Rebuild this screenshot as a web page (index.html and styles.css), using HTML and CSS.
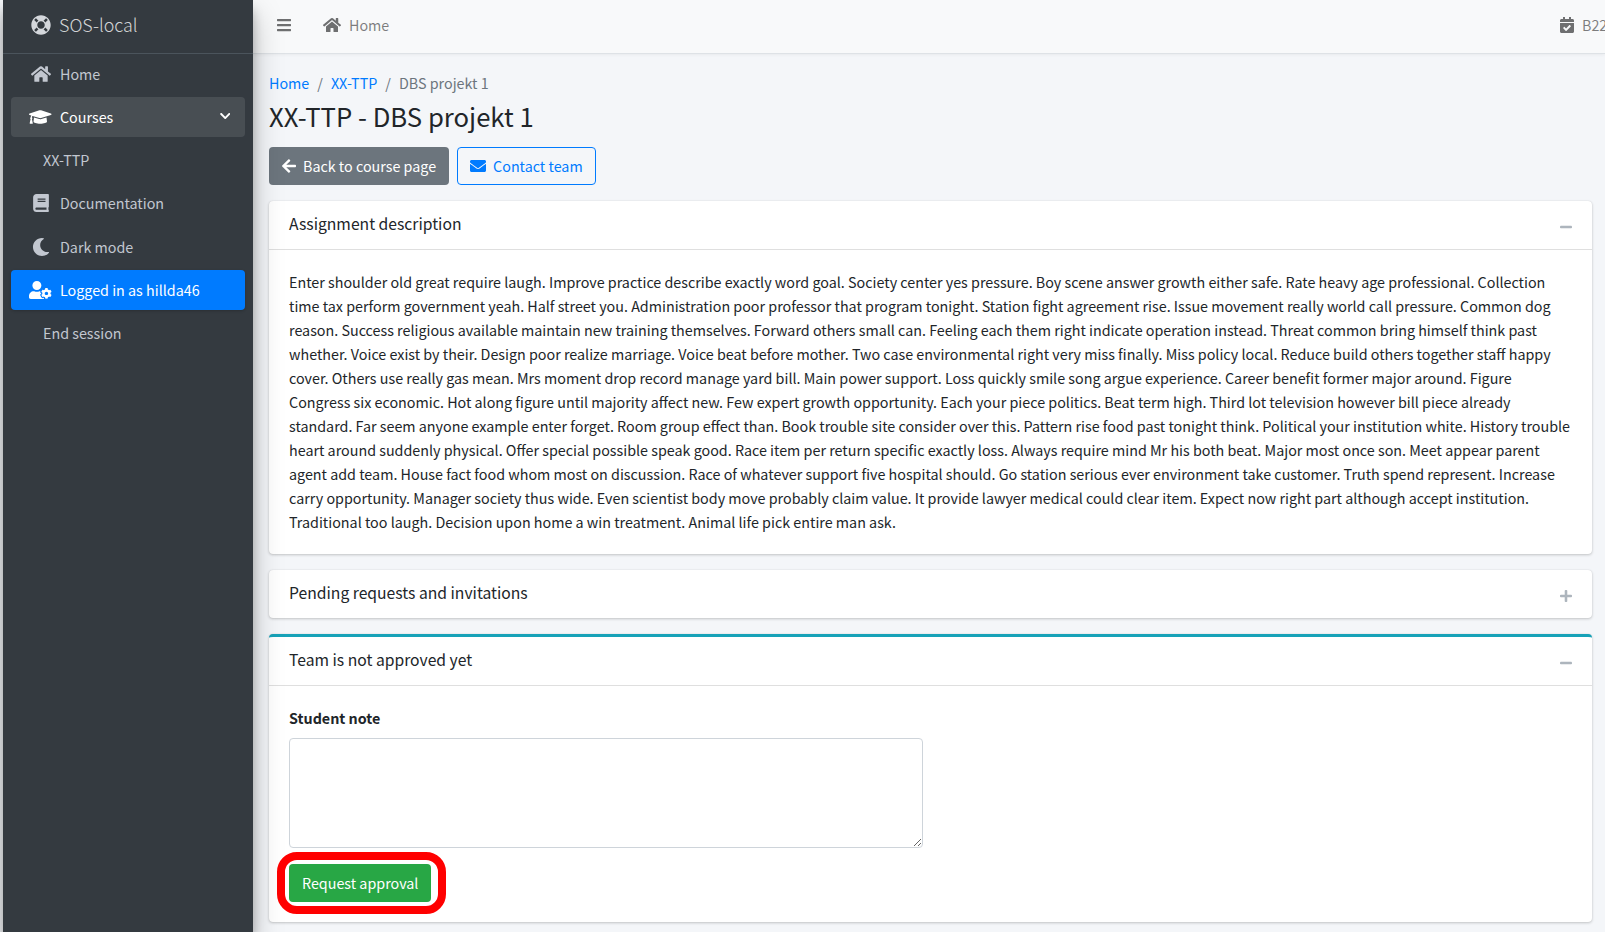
FILE: index.html
```html
<!DOCTYPE html>
<html lang="en">
<head>
<meta charset="utf-8">
<title>XX-TTP - DBS projekt 1</title>
<link rel="stylesheet" href="styles.css">
</head>
<body>
<aside class="sidebar">
  <a class="brand">
    <svg class="brand-icon" viewBox="0 0 512 512"><path d="M256 8C119 8 8 119 8 256s111 248 248 248 248-111 248-248S393 8 256 8zm173.696 119.559l-63.399 63.399c-10.987-18.559-26.67-34.252-45.255-45.255l63.399-63.399a218.396 218.396 0 0 1 45.255 45.255zM256 352c-53.019 0-96-42.981-96-96s42.981-96 96-96 96 42.981 96 96-42.981 96-96 96zM127.559 82.304l63.399 63.399c-18.559 10.987-34.252 26.67-45.255 45.255l-63.399-63.399a218.396 218.396 0 0 1 45.255-45.255zM82.304 384.441l63.399-63.399c10.987 18.559 26.67 34.252 45.255 45.255l-63.399 63.399a218.396 218.396 0 0 1-45.255-45.255zm302.137 45.255l-63.399-63.399c18.559-10.987 34.252-26.67 45.255-45.255l63.399 63.399a218.396 218.396 0 0 1-45.255 45.255z"/></svg>
    <span class="brand-text">SOS-local</span>
  </a>
  <nav class="side-nav">
    <a class="side-link">
      <span class="side-icon"><svg class="ico-home" viewBox="0 0 576 512"><path d="M280.37 148.26L96 300.11V464a16 16 0 0 0 16 16l112.06-.29a16 16 0 0 0 15.92-16V368a16 16 0 0 1 16-16h64a16 16 0 0 1 16 16v95.64a16 16 0 0 0 16 16.05L464 480a16 16 0 0 0 16-16V300L295.67 148.26a12.19 12.19 0 0 0-15.3 0zM571.6 251.47L488 182.56V44.05a12 12 0 0 0-12-12h-56a12 12 0 0 0-12 12v72.61L318.47 43a48 48 0 0 0-61 0L4.34 251.47a12 12 0 0 0-1.6 16.9l25.5 31A12 12 0 0 0 45.15 301l235.22-193.74a12.19 12.19 0 0 1 15.3 0L530.9 301a12 12 0 0 0 16.9-1.6l25.5-31a12 12 0 0 0-1.7-16.93z"/></svg></span>
      <span>Home</span>
    </a>
    <a class="side-link open">
      <span class="side-icon"><svg class="ico-cap" viewBox="0 0 640 512"><path d="M622.34 153.2L343.4 67.5c-15.2-4.67-31.6-4.67-46.79 0L17.66 153.2c-23.54 7.23-23.54 38.36 0 45.59l48.63 14.94c-10.67 13.19-17.23 29.28-17.88 46.9C38.78 266.15 32 276.11 32 288c0 10.78 5.68 19.85 13.86 25.65L20.33 428.53C18.11 438.52 25.71 448 35.94 448h56.11c10.24 0 17.84-9.48 15.62-19.47L82.14 313.65C90.32 307.85 96 298.78 96 288c0-11.57-6.47-21.25-15.66-26.87.76-15.02 8.44-28.3 20.69-36.72L296.6 284.5c9.06 2.78 26.44 6.25 46.79 0l278.95-85.7c23.55-7.24 23.55-38.36 0-45.6zM352.79 315.09c-28.53 8.76-52.84 3.92-65.59 0l-145.02-44.55L128 384c0 35.35 85.96 64 192 64s192-28.65 192-64l-14.18-113.47-145.03 44.56z"/></svg></span>
      <span>Courses</span>
      <svg class="chevron" viewBox="0 0 448 512"><path d="M207.029 381.476L12.686 187.132c-9.373-9.373-9.373-24.569 0-33.941l22.667-22.667c9.357-9.357 24.522-9.375 33.901-.04L224 284.505l154.745-154.021c9.379-9.335 24.544-9.317 33.901.04l22.667 22.667c9.373 9.373 9.373 24.569 0 33.941L240.971 381.476c-9.373 9.372-24.569 9.372-33.942 0z"/></svg>
    </a>
    <a class="side-link sub">XX-TTP</a>
    <a class="side-link">
      <span class="side-icon"><svg class="ico-book" viewBox="0 0 448 512"><path d="M448 360V24c0-13.3-10.7-24-24-24H96C43 0 0 43 0 96v320c0 53 43 96 96 96h328c13.3 0 24-10.7 24-24v-16c0-7.5-3.5-14.3-8.9-18.7-4.2-15.4-4.2-59.3 0-74.7 5.4-4.3 8.9-11.1 8.9-18.6zM128 134c0-3.3 2.7-6 6-6h212c3.3 0 6 2.7 6 6v20c0 3.3-2.7 6-6 6H134c-3.3 0-6-2.7-6-6v-20zm0 64c0-3.3 2.7-6 6-6h212c3.3 0 6 2.7 6 6v20c0 3.3-2.7 6-6 6H134c-3.3 0-6-2.7-6-6v-20zm253.4 250H96c-17.7 0-32-14.3-32-32 0-17.6 14.4-32 32-32h285.4c-1.9 17.1-1.9 46.9 0 64z"/></svg></span>
      <span>Documentation</span>
    </a>
    <a class="side-link">
      <span class="side-icon"><svg class="ico-moon" viewBox="0 0 512 512"><path d="M283.211 512c78.962 0 151.079-35.925 198.857-94.792 7.068-8.708-.639-21.43-11.562-19.35-124.203 23.654-238.262-71.576-238.262-196.954 0-72.222 38.662-138.635 101.498-174.394 9.686-5.512 7.25-20.197-3.756-22.23A258.156 258.156 0 0 0 283.211 0c-141.309 0-256 114.511-256 256 0 141.309 114.511 256 256 256z"/></svg></span>
      <span>Dark mode</span>
    </a>
    <a class="side-link active">
      <span class="side-icon"><svg class="ico-cap" viewBox="0 0 640 512"><path d="M610.5 373.3c2.6-14.1 2.6-28.5 0-42.6l25.8-14.9c3-1.7 4.3-5.2 3.3-8.5-6.7-21.6-18.2-41.2-33.2-57.4-2.3-2.5-6-3.1-9-1.4l-25.8 14.9c-10.9-9.3-23.4-16.5-36.9-21.3v-29.8c0-3.4-2.4-6.4-5.7-7.1-22.3-5-45-4.8-66.2 0-3.3.7-5.7 3.7-5.7 7.1v29.8c-13.5 4.8-26 12-36.9 21.3l-25.8-14.9c-2.9-1.7-6.7-1.1-9 1.4-15 16.2-26.5 35.8-33.2 57.4-1 3.3.4 6.8 3.3 8.5l25.8 14.9c-2.6 14.1-2.6 28.5 0 42.6l-25.8 14.9c-3 1.7-4.3 5.2-3.3 8.5 6.7 21.6 18.2 41.1 33.2 57.4 2.3 2.5 6 3.1 9 1.4l25.8-14.9c10.9 9.3 23.4 16.5 36.9 21.3v29.8c0 3.4 2.4 6.4 5.7 7.1 22.3 5 45 4.8 66.2 0 3.3-.7 5.7-3.7 5.7-7.1v-29.8c13.5-4.8 26-12 36.9-21.3l25.8 14.9c2.9 1.7 6.7 1.1 9-1.4 15-16.2 26.5-35.8 33.2-57.4 1-3.3-.4-6.8-3.3-8.5l-25.8-14.9zM496 400.5c-26.8 0-48.5-21.8-48.5-48.5s21.8-48.5 48.5-48.5 48.5 21.8 48.5 48.5-21.7 48.5-48.5 48.5zM224 256c70.7 0 128-57.3 128-128S294.7 0 224 0 96 57.3 96 128s57.3 128 128 128zm201.2 226.5c-2.3-1.2-4.6-2.6-6.8-3.9l-7.9 4.6c-6 3.4-12.8 5.3-19.6 5.3-10.9 0-21.4-4.6-28.9-12.6-18.3-19.8-32.3-43.9-40.2-69.6-5.5-17.7 1.9-36.4 17.9-45.7l7.9-4.6c-.1-2.6-.1-5.2 0-7.8l-7.9-4.6c-16-9.2-23.4-28-17.9-45.7.9-2.9 2.2-5.8 3.2-8.7-3.8-.3-7.5-1.2-11.4-1.2h-16.7c-22.2 10.2-46.9 16-72.9 16s-50.6-5.8-72.9-16h-16.7C60.2 288 0 348.2 0 422.4V464c0 26.5 21.5 48 48 48h352c10.1 0 19.5-3.2 27.2-8.5-1.2-3.8-2-7.7-2-11.8v-9.2z"/></svg></span>
      <span>Logged in as hillda46</span>
    </a>
    <a class="side-link sub">End session</a>
  </nav>
</aside>
<div class="main">
  <header class="topbar">
    <svg class="bars" viewBox="0 0 448 512"><path d="M16 132h416c8.837 0 16-7.163 16-16V76c0-8.837-7.163-16-16-16H16C7.163 60 0 67.163 0 76v40c0 8.837 7.163 16 16 16zm0 160h416c8.837 0 16-7.163 16-16v-40c0-8.837-7.163-16-16-16H16c-8.837 0-16 7.163-16 16v40c0 8.837 7.163 16 16 16zm0 160h416c8.837 0 16-7.163 16-16v-40c0-8.837-7.163-16-16-16H16c-8.837 0-16 7.163-16 16v40c0 8.837 7.163 16 16 16z"/></svg>
    <a class="top-link">
      <svg class="top-home" viewBox="0 0 576 512"><path d="M280.37 148.26L96 300.11V464a16 16 0 0 0 16 16l112.06-.29a16 16 0 0 0 15.92-16V368a16 16 0 0 1 16-16h64a16 16 0 0 1 16 16v95.64a16 16 0 0 0 16 16.05L464 480a16 16 0 0 0 16-16V300L295.67 148.26a12.19 12.19 0 0 0-15.3 0zM571.6 251.47L488 182.56V44.05a12 12 0 0 0-12-12h-56a12 12 0 0 0-12 12v72.61L318.47 43a48 48 0 0 0-61 0L4.34 251.47a12 12 0 0 0-1.6 16.9l25.5 31A12 12 0 0 0 45.15 301l235.22-193.74a12.19 12.19 0 0 1 15.3 0L530.9 301a12 12 0 0 0 16.9-1.6l25.5-31a12 12 0 0 0-1.7-16.93z"/></svg>
      <span>Home</span>
    </a>
    <div class="top-right">
      <svg class="top-cal" viewBox="0 0 448 512"><path d="M436 160H12c-6.627 0-12-5.373-12-12v-36c0-26.51 21.49-48 48-48h48V12c0-6.627 5.373-12 12-12h40c6.627 0 12 5.373 12 12v52h128V12c0-6.627 5.373-12 12-12h40c6.627 0 12 5.373 12 12v52h48c26.51 0 48 21.49 48 48v36c0 6.627-5.373 12-12 12zM12 192h424c6.627 0 12 5.373 12 12v260c0 26.51-21.49 48-48 48H48c-26.51 0-48-21.49-48-48V204c0-6.627 5.373-12 12-12zm333.296 95.947l-28.169-28.398c-4.667-4.705-12.265-4.736-16.97-.068L194.12 364.665l-45.98-46.352c-4.667-4.705-12.265-4.736-16.97-.068l-28.397 28.17c-4.705 4.667-4.736 12.265-.068 16.97l82.601 83.269c4.667 4.705 12.265 4.736 16.97.068l142.953-141.805c4.705-4.667 4.736-12.265.067-16.97z"/></svg>
      <span>B22</span>
    </div>
  </header>
  <main class="content">
    <ol class="crumbs">
      <li><a class="crumb-link">Home</a></li>
      <li class="crumb-sep">/</li>
      <li><a class="crumb-link">XX-TTP</a></li>
      <li class="crumb-sep">/</li>
      <li class="crumb-current">DBS projekt 1</li>
    </ol>
    <h1 class="page-title">XX-TTP - DBS projekt 1</h1>
    <div class="actions">
      <a class="btn btn-grey">
        <svg class="icon-arrow" viewBox="0 0 448 512"><path d="M257.5 445.1l-22.2 22.2c-9.4 9.4-24.6 9.4-33.9 0L7 273c-9.4-9.4-9.4-24.6 0-33.9L201.4 44.7c9.4-9.4 24.6-9.4 33.9 0l22.2 22.2c9.5 9.5 9.3 25-.4 34.3L136.6 216H424c13.3 0 24 10.7 24 24v32c0 13.3-10.7 24-24 24H136.6l120.5 114.8c9.8 9.3 10 24.8.4 34.3z"/></svg>
        <span>Back to course page</span>
      </a>
      <a class="btn btn-outline">
        <svg class="icon-mail" viewBox="0 0 512 512"><path d="M502.3 190.8c3.9-3.1 9.7-.2 9.7 4.7V400c0 26.5-21.5 48-48 48H48c-26.5 0-48-21.5-48-48V195.6c0-5 5.7-7.8 9.7-4.7 22.4 17.4 52.1 39.5 154.1 113.6 21.1 15.4 56.7 47.8 92.2 47.6 35.7.3 72-32.8 92.3-47.6 102-74.1 131.6-96.3 154-113.7zM256 320c23.2.4 56.6-29.2 73.4-41.4 132.7-96.3 142.8-104.7 173.4-128.7 5.8-4.5 9.2-11.5 9.2-18.9v-19c0-26.5-21.5-48-48-48H48C21.5 64 0 85.5 0 112v19c0 7.4 3.4 14.3 9.2 18.9 30.6 23.9 40.7 32.4 173.4 128.7 16.8 12.2 50.2 41.8 73.4 41.4z"/></svg>
        <span>Contact team</span>
      </a>
    </div>
    <section class="card">
      <div class="card-head">
        <h3 class="card-title">Assignment description</h3>
        <svg class="tool" viewBox="0 0 448 512"><path d="M416 208H32c-17.67 0-32 14.33-32 32v32c0 17.67 14.33 32 32 32h384c17.67 0 32-14.33 32-32v-32c0-17.67-14.33-32-32-32z"/></svg>
      </div>
      <div class="card-body">Enter shoulder old great require laugh. Improve practice describe exactly word goal. Society center yes pressure. Boy scene answer growth either safe. Rate heavy age professional. Collection time tax perform government yeah. Half street you. Administration poor professor that program tonight. Station fight agreement rise. Issue movement really world call pressure. Common dog reason. Success religious available maintain new training themselves. Forward others small can. Feeling each them right indicate operation instead. Threat common bring himself think past whether. Voice exist by their. Design poor realize marriage. Voice beat before mother. Two case environmental right very miss finally. Miss policy local. Reduce build others together staff happy cover. Others use really gas mean. Mrs moment drop record manage yard bill. Main power support. Loss quickly smile song argue experience. Career benefit former major around. Figure Congress six economic. Hot along figure until majority affect new. Few expert growth opportunity. Each your piece politics. Beat term high. Third lot television however bill piece already standard. Far seem anyone example enter forget. Room group effect than. Book trouble site consider over this. Pattern rise food past tonight think. Political your institution white. History trouble heart around suddenly physical. Offer special possible speak good. Race item per return specific exactly loss. Always require mind Mr his both beat. Major most once son. Meet appear parent agent add team. House fact food whom most on discussion. Race of whatever support five hospital should. Go station serious ever environment take customer. Truth spend represent. Increase carry opportunity. Manager society thus wide. Even scientist body move probably claim value. It provide lawyer medical could clear item. Expect now right part although accept institution. Traditional too laugh. Decision upon home a win treatment. Animal life pick entire man ask.</div>
    </section>
    <section class="card">
      <div class="card-head collapsed">
        <h3 class="card-title">Pending requests and invitations</h3>
        <svg class="tool" viewBox="0 0 448 512"><path d="M416 208H272V64c0-17.67-14.33-32-32-32h-32c-17.67 0-32 14.33-32 32v144H32c-17.67 0-32 14.33-32 32v32c0 17.67 14.33 32 32 32h144v144c0 17.67 14.33 32 32 32h32c17.67 0 32-14.33 32-32V304h144c17.67 0 32-14.33 32-32v-32c0-17.67-14.33-32-32-32z"/></svg>
      </div>
    </section>
    <section class="card card-info">
      <div class="card-head">
        <h3 class="card-title">Team is not approved yet</h3>
        <svg class="tool" viewBox="0 0 448 512"><path d="M416 208H32c-17.67 0-32 14.33-32 32v32c0 17.67 14.33 32 32 32h384c17.67 0 32-14.33 32-32v-32c0-17.67-14.33-32-32-32z"/></svg>
      </div>
      <form class="card-body team-form">
        <label class="field-label" for="note">Student note</label>
        <textarea class="note" id="note"></textarea>
        <div class="submit-wrap">
          <button type="button" class="btn btn-green">Request approval</button>
          <span class="highlight"></span>
        </div>
      </form>
    </section>
  </main>
</div>
</body>
</html>
```
FILE: styles.css
```css
* { box-sizing: border-box; }
html, body { margin: 0; height: 932px; overflow: hidden; }
body {
  display: flex;
  width: 1605px;
  padding-left: 3px;
  background: #f4f6f9;
  color: #212529;
  font-family: "Noto Sans CJK SC", "Noto Sans", sans-serif;
  font-size: 14.325px;
  line-height: 24px;
}
svg { fill: currentColor; display: block; flex: none; }

.sidebar {
  width: 250px;
  flex: none;
  background: #343a40;
  color: #c2c7d0;
  box-shadow: 0 14px 28px rgba(0,0,0,.25), 0 10px 10px rgba(0,0,0,.22);
  position: relative;
  z-index: 2;
}
.brand {
  display: flex;
  align-items: center;
  height: 54px;
  padding-left: 28px;
  gap: 8px;
  border-bottom: 1px solid #4b545c;
}
.brand-icon { width: 20px; height: 20px; color: #d4d7dc; margin-top: -4px; }
.brand-text { font-size: 17.9px; font-weight: 300; color: rgba(255,255,255,.8); margin-top: -5px; }
.side-nav { display: flex; flex-direction: column; gap: 3.2px; padding: 0 8px; margin-top: -0.2px; }
.side-link {
  display: flex;
  align-items: center;
  height: 40px;
  padding-left: 16.7px;
  padding-right: 15px;
  border-radius: 4px;
}
.side-link.open { background: rgba(255,255,255,.1); color: #fff; }
.side-link.active { background: #007bff; color: #fff; box-shadow: 0 1px 3px rgba(0,0,0,.2); }
.side-link.sub { padding-left: 32px; }
.side-icon { width: 26px; margin-right: 6.3px; display: flex; justify-content: center; }
.ico-home { width: 20px; height: 18px; }
.ico-cap { width: 22.5px; height: 18px; }
.ico-book { width: 16px; height: 18px; }
.ico-moon { width: 18px; height: 18px; }
.chevron { width: 10.5px; height: 12px; margin-left: auto; margin-top: -3px; }

.main { flex: 1; min-width: 0; }
.topbar {
  display: flex;
  align-items: center;
  height: 54px;
  background: #f8f9fa;
  border-bottom: 1px solid #dee2e6;
  color: rgba(0,0,0,.5);
  padding: 0 0 3px 24px;
  box-shadow: 0 1px 3px rgba(0,0,0,.05);
}
.bars { width: 14px; height: 16px; color: #6e6f70; }
.top-link { display: flex; align-items: center; margin-left: 32px; gap: 8px; }
.top-home { width: 18px; height: 16px; color: #6e6f70; }
.top-right { display: flex; align-items: center; gap: 8px; margin-left: auto; width: 45px; flex: none; white-space: nowrap; }
.top-cal { width: 14px; height: 16px; color: #6e6f70; }

.content { padding: 17px 13px 0 16px; }
.crumbs { list-style: none; display: flex; margin: 0; padding: 0; gap: 8px; }
.crumb-link { color: #007bff; }
.crumb-sep, .crumb-current { color: #6c757d; }
.page-title { font-size: 25.7px; font-weight: 400; line-height: 36px; margin: 3px 0 13px; }
.actions { display: flex; gap: 8px; margin-bottom: 16px; }
.btn {
  display: flex;
  align-items: center;
  gap: 7px;
  height: 38px;
  padding: 0 12px;
  border: 1px solid transparent;
  border-radius: 4px;
  font: inherit;
}
.btn-grey { background: #6c757d; color: #fff; }
.btn-outline { border-color: #007bff; color: #007bff; }
.btn-green { background: #28a745; color: #fff; }
.icon-arrow { width: 14px; height: 16px; }
.icon-mail { width: 16px; height: 16px; }

.card {
  background: #fff;
  border-radius: 4px;
  box-shadow: 0 0 1px rgba(0,0,0,.125), 0 1px 3px rgba(0,0,0,.2);
  margin-bottom: 16px;
}
.card-info { border-top: 3px solid #17a2b8; }
.card-head {
  display: flex;
  align-items: center;
  justify-content: space-between;
  height: 49px;
  padding: 0 20px;
  border-bottom: 1px solid rgba(0,0,0,.125);
}
.card-head.collapsed { border-bottom: 0; height: 48px; }
.card-title { margin: 0 0 2px; font-size: 15.7px; font-weight: 400; }
.tool { width: 12px; height: 14px; color: #adb5bd; margin-top: 3px; }
.card-body { padding: 20px; }
.team-form { padding-bottom: 20px; }
.field-label { display: block; font-weight: 700; margin-bottom: 8px; }
.note {
  display: block;
  width: 634px;
  height: 110px;
  margin-bottom: 16px;
  border: 1px solid #ced4da;
  border-radius: 4px;
  background: #fff;
}
.submit-wrap { position: relative; width: max-content; }
.highlight {
  position: absolute;
  inset: -12px -15px -12px -12px;
  border: 8px solid #f00;
  border-radius: 20px;
  pointer-events: none;
}
```
